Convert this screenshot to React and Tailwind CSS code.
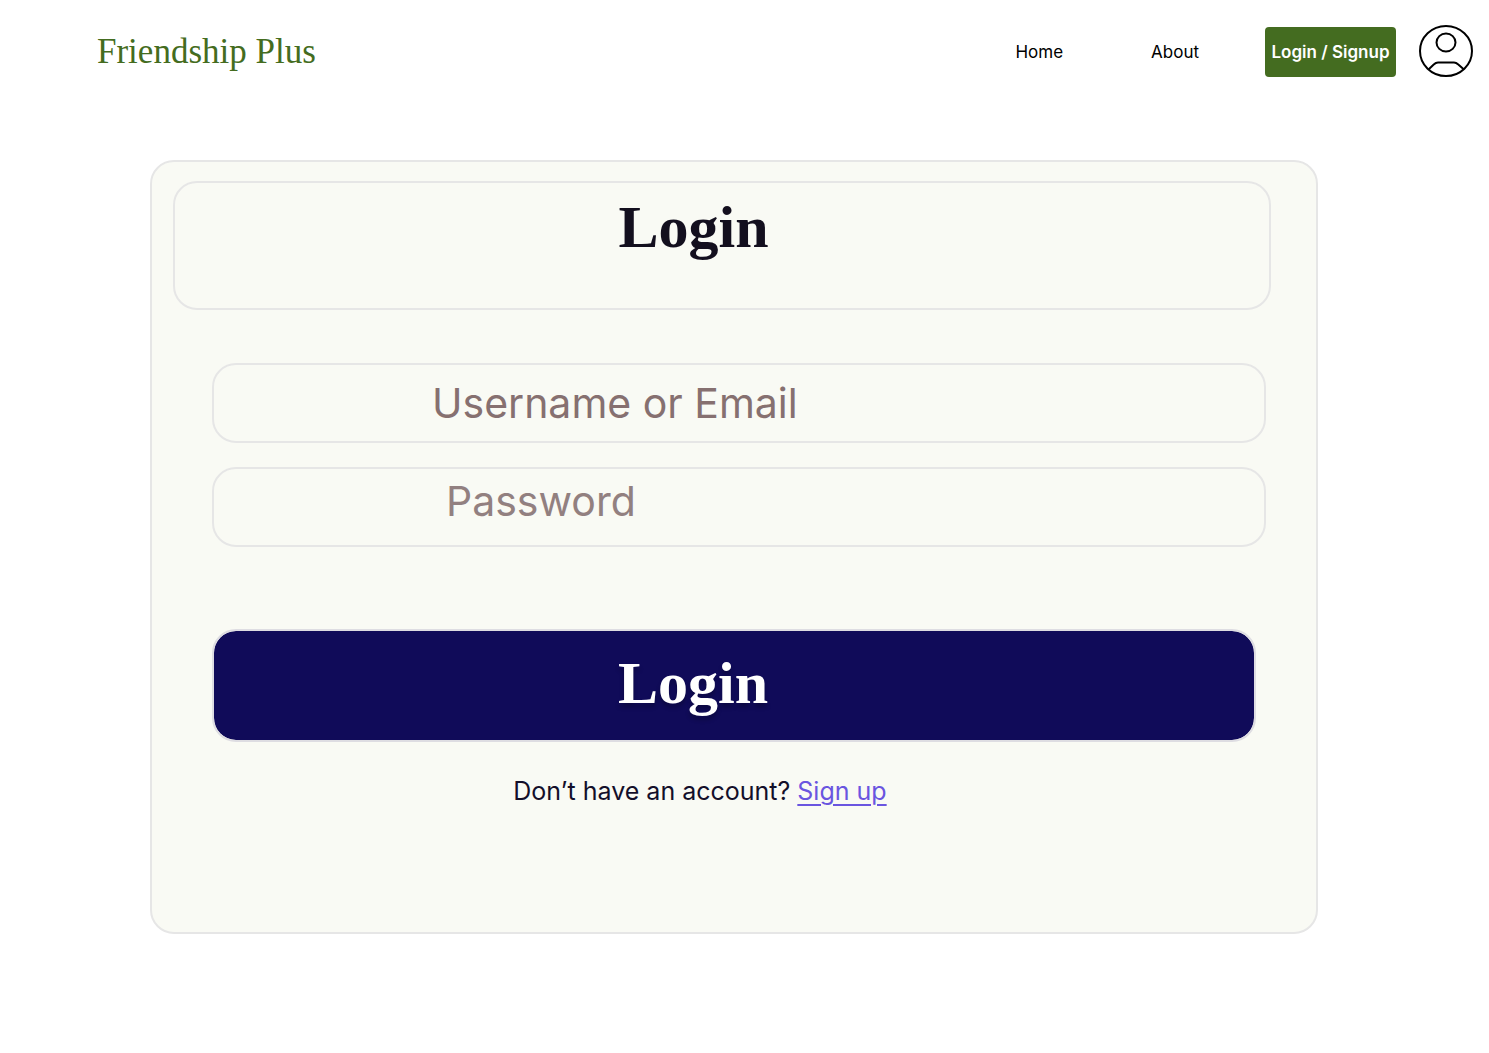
function Avatar() {
  return (
    <svg viewBox="0 1 54 54" className="h-[54px] w-[54px]" fill="none" stroke="#000" strokeWidth="2" aria-hidden="true">
      <ellipse cx="27" cy="27" rx="26" ry="25" />
      <ellipse cx="27" cy="18.5" rx="9.5" ry="9" />
      <path d="M9.5 45.5 L15 40.3 Q16.8 38.500 19 38.500 H35 Q37.200 38.500 39 40.300 L45 45.500" />
    </svg>
  );
}

function Header() {
  return (
    <header className="flex items-center justify-between pt-[25px] pr-4 pl-[97px]">
      <a href="#" className="font-['Liberation_Serif',serif] text-[35px] leading-[50px] text-[#446c20]">
        Friendship Plus
      </a>
      <nav className="flex items-center text-[17px] leading-6 text-black">
        <a href="#home" className="mr-[88px]">Home</a>
        <a href="#about" className="mr-[66px]">About</a>
        <button type="button" className="mr-[23px] h-[50px] w-[131px] rounded bg-[#446c20] font-semibold whitespace-nowrap text-white">
          Login / Signup
        </button>
        <button type="button" aria-label="Profile">
          <Avatar />
        </button>
      </nav>
    </header>
  );
}

const field =
  "block h-20 w-full rounded-3xl border-2 border-[#e6e6e6] bg-transparent text-[41px] leading-[52px] text-[#867070] outline-none";

function LoginCard() {
  return (
    <main className="mt-[81px] mr-[171px] ml-[150px] rounded-3xl border-2 border-[#e6e6e6] bg-[#f9faf4] pt-[19px] pb-[123px]">
      <div className="mr-[45px] ml-[21px] h-[129px] rounded-3xl border-2 border-[#e6e6e6] pt-2 pr-[57px] text-center">
        <h1 className="font-['Liberation_Serif',serif] text-[60px] leading-[72px] font-bold text-[#130f1e]">Login</h1>
      </div>
      <form className="mt-[53px] mr-[50px] ml-[60px]" onSubmit={(e) => e.preventDefault()}>
        <input
          type="text"
          aria-label="Username or Email"
          placeholder="Username or Email"
          className={`${field} pl-[218px] placeholder:text-[#867070]`}
        />
        <input
          type="password"
          aria-label="Password"
          placeholder="Password"
          className={`${field} mt-6 pb-3 pl-[232px] placeholder:text-[#928080]`}
        />
        <div className="mt-[82px] pr-[10px]">
          <button
            type="submit"
            className="block h-[113px] w-full rounded-3xl border-2 border-[#dedde2] bg-[#100b59] bg-clip-padding pr-[82px] pb-1.5 font-['Liberation_Serif',serif] text-[60px] leading-[72px] font-bold text-white [text-shadow:0_4px_4px_rgba(0,0,0,0.25)]"
          >
            Login
          </button>
        </div>
      </form>
      <p className="mt-[31px] pr-[68px] text-center text-[25px] leading-9 text-[#130f2a]">
        Don’t have an account?{" "}
        <a href="#signup" className="text-[#6a55e0] underline decoration-2 underline-offset-4">Sign up</a>
      </p>
    </main>
  );
}

export default function App() {
  return (
    <div className="min-h-screen bg-white font-['Inter',sans-serif]">
      <Header />
      <LoginCard />
    </div>
  );
}
